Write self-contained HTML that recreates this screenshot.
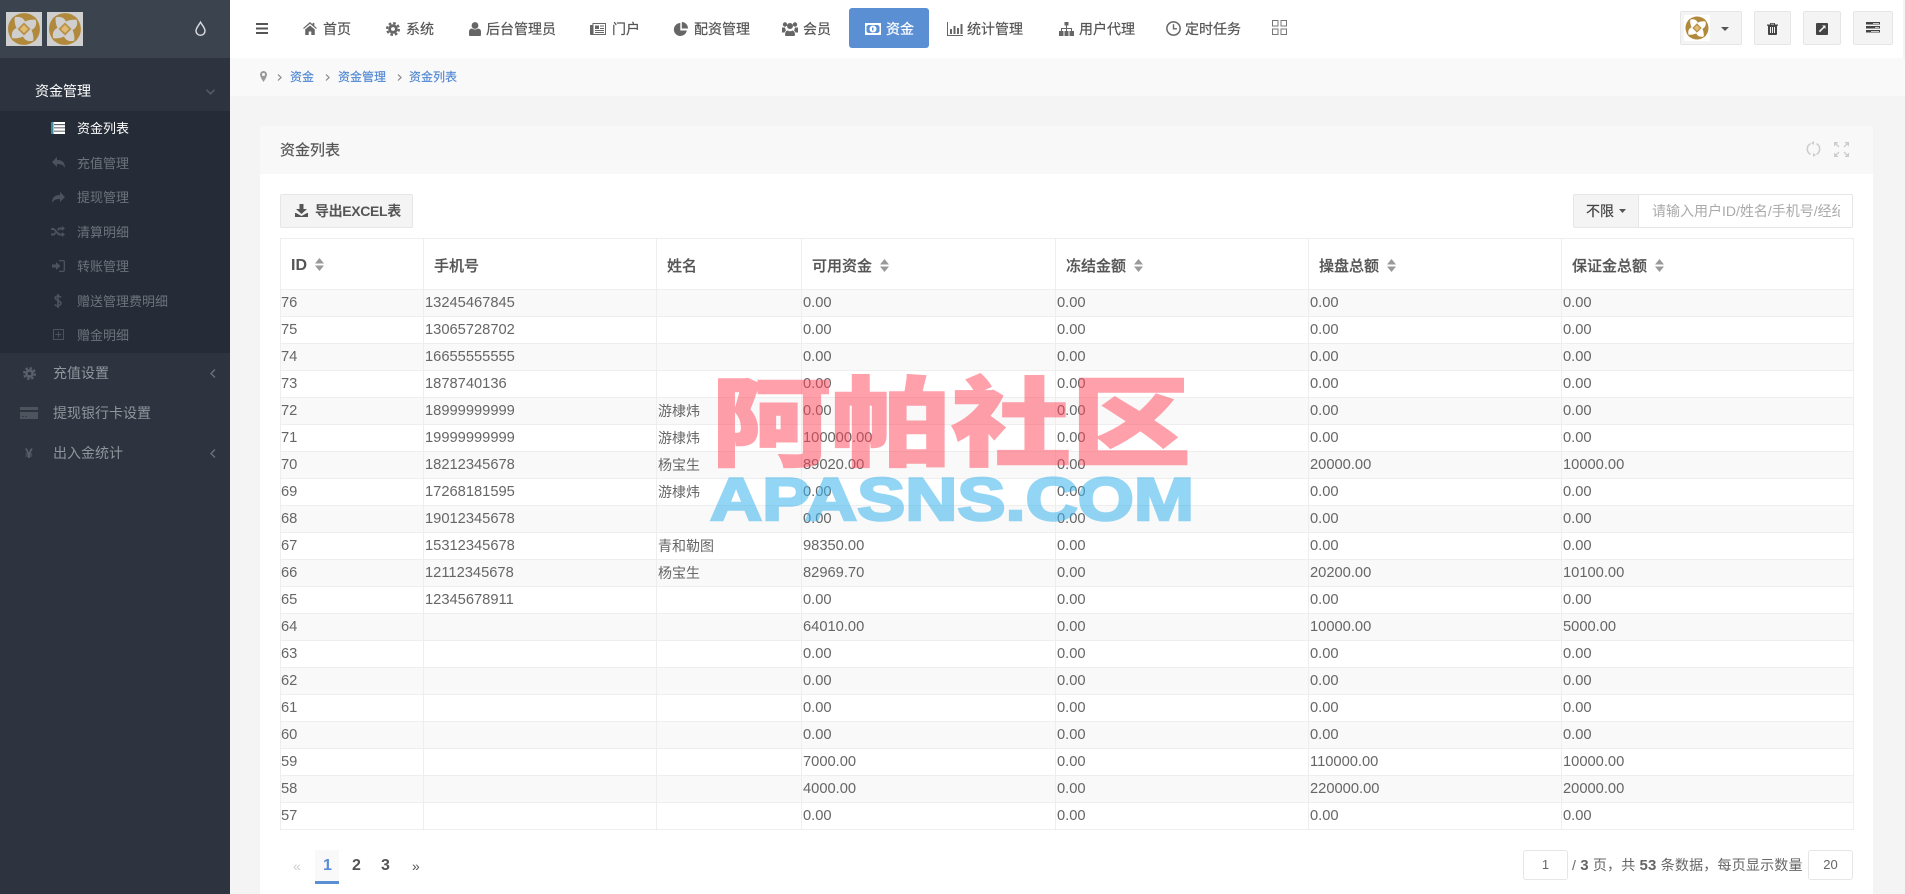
<!DOCTYPE html>
<html lang="zh-CN">
<head>
<meta charset="utf-8">
<title>资金列表</title>
<style>
*{box-sizing:border-box}
html,body{margin:0;padding:0;width:1905px;height:894px;overflow:hidden;background:#f4f4f4;font-family:"Liberation Sans","Noto Sans CJK SC",sans-serif;color:#666}
.a{position:absolute;white-space:nowrap}
svg{display:block;overflow:visible}
#side{position:absolute;left:0;top:0;width:230px;height:894px;background:#2d3440}
#logo{position:absolute;left:0;top:0;width:230px;height:58px;background:#3b434f}
#sub{position:absolute;left:0;top:111px;width:230px;height:242px;background:#262c37}
#side .t{position:absolute;white-space:nowrap;font-size:13px;line-height:20px;color:#6d737c;margin-top:1px}
#side .m{position:absolute;white-space:nowrap;font-size:14px;line-height:20px;color:#90959c}
#side svg{position:absolute}
#nav{position:absolute;left:0;top:0;width:1903px;height:58px;background:#fff}
#nav .n{position:absolute;top:19px;white-space:nowrap;font-size:14px;line-height:20px;color:#555;-webkit-text-stroke:.2px #555}
#nav svg{position:absolute;color:#666}
.btn{position:absolute;background:#f4f4f4;border:1px solid #e6e6e6;border-radius:2px}
#crumb{position:absolute;left:230px;top:58px;width:1675px;height:38px;background:#f9f9f9}
.c{position:absolute;top:68px;font-size:12px;line-height:18px;color:#4f87d2;white-space:nowrap;-webkit-text-stroke:.15px #4f87d2}
#panel{position:absolute;left:260px;top:126px;width:1613px;height:768px;background:#fff}
#phead{position:absolute;left:0;top:0;width:1613px;height:48px;background:#f8f8f8}
table{position:absolute;left:280px;top:238px;width:1573px;border-collapse:collapse;table-layout:fixed;font-size:14.7px;color:#666;background:#fff}
th,td{border:1px solid #eee;padding:0;overflow:hidden;white-space:nowrap}
th{height:51px;text-align:left;padding-left:10px;padding-top:2px;font-size:15px;font-weight:500;color:#555;-webkit-text-stroke:.2px #555}
th.b{font-weight:700;font-size:16px;-webkit-text-stroke:0;padding-top:3px}
td{height:27px;line-height:26px;padding-left:1px}
td:first-child{padding-left:0}
td.s{font-size:14px}
tr.o td{background:#f9f9f9}
.sort{display:inline-block;vertical-align:-1px;margin-left:8px;width:9px;height:13px}
</style>
</head>
<body>

<div id="nav">
  <svg style="left:256px;top:23px" width="12" height="11" viewBox="0 0 12 11"><path fill="#555" d="M0 0h12v2H0zM0 4.500h12v2H0zM0 9h12v2H0z"/></svg>

  <svg style="left:303px;top:22px" width="14" height="13" viewBox="0 0 16 15"><path fill="currentColor" d="M8 0 0 7l1 1 7-6 7 6 1-1-3-2.600V1h-2v1.700zM2.500 8.500V15h4v-4h3v4h4V8.500L8 4z"/></svg>
  <div class="n" style="left:323px">首页</div>

  <svg style="left:386px;top:22px" width="14" height="14" viewBox="0 0 16 16"><g fill="none" stroke="currentColor"><circle cx="8" cy="8" r="3.800" stroke-width="3.200"/><circle cx="8" cy="8" r="6.700" stroke-width="2.600" stroke-dasharray="3 2.260"/></g></svg>
  <div class="n" style="left:406px">系统</div>

  <svg style="left:469px;top:22px" width="12" height="14" viewBox="0 0 12 14"><circle cx="6" cy="3.500" r="3.400" fill="currentColor"/><path fill="currentColor" d="M1 14h10q1 0 1-1V9.500Q12 7 9 6.500 6 8.500 3 6.500 0 7 0 9.500V13q0 1 1 1z"/></svg>
  <div class="n" style="left:486px">后台管理员</div>

  <svg style="left:590px;top:23px" width="16" height="12" viewBox="0 0 16 12"><path fill="currentColor" d="M0 2h2.500V0H16v12H1q-1 0-1-1zm3.500-1v10h11.500V1zM5 2.500h4v3.500H5zm5 0h4v1h-4zm0 2.500h4v1h-4zM5 7h9v1H5zm0 2h9v1H5z" fill-rule="evenodd"/></svg>
  <div class="n" style="left:612px">门户</div>

  <svg style="left:674px;top:22px" width="14" height="14" viewBox="0 0 14 14"><path fill="currentColor" d="M6.300 1a6.500 6.500 0 1 0 6.500 7.500H6.300zM7.800 0v6.500h6.200A6.500 6.500 0 0 0 7.800 0z"/></svg>
  <div class="n" style="left:694px">配资管理</div>

  <svg style="left:782px;top:22px" width="16" height="14" viewBox="0 0 16 14"><circle cx="3" cy="2.500" r="2.200" fill="currentColor"/><circle cx="13" cy="2.500" r="2.200" fill="currentColor"/><circle cx="8" cy="4" r="3" fill="currentColor"/><path fill="currentColor" d="M0 5.500h3q.5 2 1 3-1 .5-1.500 2H0zm16 0h-3q-.5 2-1 3 1 .5 1.500 2H16zM4 14h8q1 0 1-1 0-4-2.500-4.500-2.500 1.500-5 0Q3 9 3 13q0 1 1 1z"/></svg>
  <div class="n" style="left:803px">会员</div>

  <div style="position:absolute;left:849px;top:8px;width:80px;height:40px;background:#5b8fd4;border-radius:3px"></div>
  <svg style="left:865px;top:23px;color:#fff" width="16" height="12" viewBox="0 0 16 12"><path fill="#fff" fill-rule="evenodd" d="M0 0h16v12H0zM3 2 1.500 3.500v5L3 10h10l1.500-1.500v-5L13 2zM8 2.500a3.500 3.500 0 1 1 0 7 3.500 3.500 0 0 1 0-7zM7 4.500h1.500v3H7z"/></svg>
  <div class="n" style="left:886px;color:#fff;-webkit-text-stroke:.2px #fff">资金</div>

  <svg style="left:947px;top:22px" width="16" height="14" viewBox="0 0 16 14"><path fill="currentColor" d="M0 0h1v13h15v1H0zM3 7h2v5H3zm3.500-3h2v8h-2zM10 6h2v6h-2zm3.500-4h2v10h-2z"/></svg>
  <div class="n" style="left:967px">统计管理</div>

  <svg style="left:1059px;top:22px" width="15" height="14" viewBox="0 0 15 14"><path fill="currentColor" d="M5.500 0h4v3.500h-1.500v2.500h5V9h2v5h-4.500V9h1.500V7H8v2h1.500v5h-4V9H7V7H3v2h1.500v5H0V9h2V6h5V3.500H5.500z"/></svg>
  <div class="n" style="left:1079px">用户代理</div>

  <svg style="left:1166px;top:21px" width="15" height="15" viewBox="0 0 14 14"><circle cx="7" cy="7" r="6.200" fill="none" stroke="currentColor" stroke-width="1.400"/><path d="M7 3v4.300h3.200" fill="none" stroke="currentColor" stroke-width="1.300"/></svg>
  <div class="n" style="left:1185px">定时任务</div>

  <svg style="left:1272px;top:20px" width="15" height="15" viewBox="0 0 15 15"><path fill="none" stroke="#777" d="M.5.500h5.500v5.500H.5zM9 .5h5.500v5.500H9zM.5 9h5.500v5.500H.5zM9 9h5.500v5.500H9z"/></svg>

  <div class="btn" style="left:1680px;top:11px;width:62px;height:34px"></div>
  <div style="position:absolute;left:1684px;top:15px;width:26px;height:26px;background:#fff"></div>
  <svg style="left:1684px;top:15px" width="26" height="26" viewBox="0 0 36 36"><use href="#swirl"/></svg>
  <svg style="left:1721px;top:27px" width="8" height="4" viewBox="0 0 8 4"><path fill="#555" d="M0 0h8L4 4z"/></svg>

  <div class="btn" style="left:1754px;top:11px;width:37px;height:34px"></div>
  <svg style="left:1767px;top:23px" width="11" height="12" viewBox="0 0 11 12"><path fill="#444" fill-rule="evenodd" d="M0 1.500h3V.5q0-.5.500-.5h4q.5 0 .5.5v1h3v1.200h-1V11q0 1-1 1H2q-1 0-1-1V2.700H0zM4 .8v.7h3V.8zM3 4v6h1V4zm2 0v6h1V4zm2 0v6h1V4z"/></svg>

  <div class="btn" style="left:1803px;top:11px;width:38px;height:34px"></div>
  <svg style="left:1816px;top:23px" width="12" height="12" viewBox="0 0 12 12"><path fill="#444" fill-rule="evenodd" d="M1 0h10q1 0 1 1v10q0 1-1 1H1q-1 0-1-1V1q0-1 1-1zm5 2.500 1.300 1.300L2.800 8l1.200 1.200 4.300-4.400L9.500 6V2.500z"/></svg>

  <div class="btn" style="left:1853px;top:11px;width:40px;height:34px"></div>
  <svg style="left:1866px;top:22px" width="14" height="11" viewBox="0 0 14 11"><path fill="#444" d="M0 0h14v2.500H0zM0 4h14v2.500H0zM0 8h14v2.500H0z"/><path fill="#f4f4f4" d="M7 1h6v.8H7zM9 5h4v.8H9zM5 9h8v.8H5z"/></svg>
</div>

<div id="crumb"></div>
<svg class="a" style="left:260px;top:71px" width="7" height="11" viewBox="0 0 7 11"><path fill="#999" fill-rule="evenodd" d="M3.500 0A3.500 3.500 0 0 1 7 3.500C7 6 3.500 11 3.500 11S0 6 0 3.500A3.500 3.500 0 0 1 3.500 0zm0 2a1.500 1.500 0 1 0 0 3 1.500 1.500 0 0 0 0-3z"/></svg>
<svg class="a" style="left:277px;top:74px" width="5" height="7" viewBox="0 0 5 7"><path fill="none" stroke="#888" stroke-width="1.200" d="M1 .5l3 3-3 3"/></svg>
<div class="c" style="left:290px">资金</div>
<svg class="a" style="left:325px;top:74px" width="5" height="7" viewBox="0 0 5 7"><path fill="none" stroke="#888" stroke-width="1.200" d="M1 .5l3 3-3 3"/></svg>
<div class="c" style="left:338px">资金管理</div>
<svg class="a" style="left:397px;top:74px" width="5" height="7" viewBox="0 0 5 7"><path fill="none" stroke="#888" stroke-width="1.200" d="M1 .5l3 3-3 3"/></svg>
<div class="c" style="left:409px">资金列表</div>

<div id="panel"><div id="phead"></div></div>
<div class="a" style="left:280px;top:140px;font-size:15px;line-height:22px;color:#555;-webkit-text-stroke:.2px #555">资金列表</div>

<svg class="a" style="left:1806px;top:141px" width="15" height="16" viewBox="0 0 15 16"><g fill="none" stroke="#ccc" stroke-width="1.500"><path d="M4.500 2.700a6 6 0 0 0 0 10.600"/><path d="M10.500 13.300a6 6 0 0 0 0-10.600"/></g><path fill="#ccc" d="M8 0v4L5 2zM7 16v-4l3 2z"/></svg>
<svg class="a" style="left:1834px;top:142px" width="15" height="15" viewBox="0 0 15 15"><path fill="none" stroke="#ccc" stroke-width="1.300" d="M1 1l4 4M14 1l-4 4M1 14l4-4M14 14l-4-4"/><path fill="#ccc" d="M0 0h4.500L0 4.500zM15 0v4.500L10.500 0zM0 15v-4.500L4.500 15zM15 15h-4.500L15 10.500z"/></svg>

<div class="btn" style="left:280px;top:194px;width:133px;height:34px"></div>
<svg class="a" style="left:295px;top:204px" width="13" height="13" viewBox="0 0 13 13"><path fill="#555" d="M4.500 0h4v5H12L6.500 10 1 5h3.500zM0 9l1 0 5.500 3L12 9h1v4H0z"/></svg>
<div class="a" style="left:315px;top:201px;font-size:14px;line-height:20px;font-weight:700;color:#555;letter-spacing:-.35px">导出EXCEL表</div>

<div class="btn" style="left:1573px;top:194px;width:66px;height:34px;background:#f4f4f4;border-radius:2px 0 0 2px"></div>
<div class="a" style="left:1586px;top:201px;font-size:14px;line-height:20px;color:#444;-webkit-text-stroke:.2px #444">不限</div>
<svg class="a" style="left:1619px;top:209px" width="7" height="4" viewBox="0 0 7 4"><path fill="#555" d="M0 0h7L3.500 4z"/></svg>
<div class="a" style="left:1638px;top:194px;width:215px;height:34px;background:#fff;border:1px solid #e6e6e6;overflow:hidden;border-radius:0 2px 2px 0"></div>
<div class="a" style="left:1652px;top:201px;width:188px;overflow:hidden;font-size:14px;line-height:20px;color:#aaa">请输入用户ID/姓名/手机号/经纪人</div>

<table>
<colgroup><col style="width:143px"><col style="width:233px"><col style="width:145px"><col style="width:254px"><col style="width:253px"><col style="width:253px"><col style="width:292px"></colgroup>
<tr>
<th class="b">ID<svg class="sort" viewBox="0 0 9 13" style="display:inline-block"><path fill="#999" d="M4.500 0 9 5.500H0zM4.500 13 0 7.500h9z"/></svg></th>
<th>手机号</th>
<th>姓名</th>
<th>可用资金<svg class="sort" viewBox="0 0 9 13" style="display:inline-block"><path fill="#999" d="M4.500 0 9 5.500H0zM4.500 13 0 7.500h9z"/></svg></th>
<th>冻结金额<svg class="sort" viewBox="0 0 9 13" style="display:inline-block"><path fill="#999" d="M4.500 0 9 5.500H0zM4.500 13 0 7.500h9z"/></svg></th>
<th>操盘总额<svg class="sort" viewBox="0 0 9 13" style="display:inline-block"><path fill="#999" d="M4.500 0 9 5.500H0zM4.500 13 0 7.500h9z"/></svg></th>
<th>保证金总额<svg class="sort" viewBox="0 0 9 13" style="display:inline-block"><path fill="#999" d="M4.500 0 9 5.500H0zM4.500 13 0 7.500h9z"/></svg></th>
</tr>
<tr class="o"><td>76</td><td>13245467845</td><td class="s"></td><td>0.00</td><td>0.00</td><td>0.00</td><td>0.00</td></tr>
<tr><td>75</td><td>13065728702</td><td class="s"></td><td>0.00</td><td>0.00</td><td>0.00</td><td>0.00</td></tr>
<tr class="o"><td>74</td><td>16655555555</td><td class="s"></td><td>0.00</td><td>0.00</td><td>0.00</td><td>0.00</td></tr>
<tr><td>73</td><td>1878740136</td><td class="s"></td><td>0.00</td><td>0.00</td><td>0.00</td><td>0.00</td></tr>
<tr class="o"><td>72</td><td>18999999999</td><td class="s">游棣炜</td><td>0.00</td><td>0.00</td><td>0.00</td><td>0.00</td></tr>
<tr><td>71</td><td>19999999999</td><td class="s">游棣炜</td><td>100000.00</td><td>0.00</td><td>0.00</td><td>0.00</td></tr>
<tr class="o"><td>70</td><td>18212345678</td><td class="s">杨宝生</td><td>89020.00</td><td>0.00</td><td>20000.00</td><td>10000.00</td></tr>
<tr><td>69</td><td>17268181595</td><td class="s">游棣炜</td><td>0.00</td><td>0.00</td><td>0.00</td><td>0.00</td></tr>
<tr class="o"><td>68</td><td>19012345678</td><td class="s"></td><td>0.00</td><td>0.00</td><td>0.00</td><td>0.00</td></tr>
<tr><td>67</td><td>15312345678</td><td class="s">青和勒图</td><td>98350.00</td><td>0.00</td><td>0.00</td><td>0.00</td></tr>
<tr class="o"><td>66</td><td>12112345678</td><td class="s">杨宝生</td><td>82969.70</td><td>0.00</td><td>20200.00</td><td>10100.00</td></tr>
<tr><td>65</td><td>12345678911</td><td class="s"></td><td>0.00</td><td>0.00</td><td>0.00</td><td>0.00</td></tr>
<tr class="o"><td>64</td><td></td><td class="s"></td><td>64010.00</td><td>0.00</td><td>10000.00</td><td>5000.00</td></tr>
<tr><td>63</td><td></td><td class="s"></td><td>0.00</td><td>0.00</td><td>0.00</td><td>0.00</td></tr>
<tr class="o"><td>62</td><td></td><td class="s"></td><td>0.00</td><td>0.00</td><td>0.00</td><td>0.00</td></tr>
<tr><td>61</td><td></td><td class="s"></td><td>0.00</td><td>0.00</td><td>0.00</td><td>0.00</td></tr>
<tr class="o"><td>60</td><td></td><td class="s"></td><td>0.00</td><td>0.00</td><td>0.00</td><td>0.00</td></tr>
<tr><td>59</td><td></td><td class="s"></td><td>7000.00</td><td>0.00</td><td>110000.00</td><td>10000.00</td></tr>
<tr class="o"><td>58</td><td></td><td class="s"></td><td>4000.00</td><td>0.00</td><td>220000.00</td><td>20000.00</td></tr>
<tr><td>57</td><td></td><td class="s"></td><td>0.00</td><td>0.00</td><td>0.00</td><td>0.00</td></tr>
</table>

<div class="a" style="left:293px;top:856px;font-size:14px;line-height:20px;color:#ccc">«</div>
<div class="a" style="left:315px;top:850px;width:24px;height:34px;background:#f9f9f9;border-bottom:3px solid #5b8fd4"></div>
<div class="a" style="left:323px;top:856px;font-size:16px;line-height:20px;font-weight:700;color:#5b8fd4">1</div>
<div class="a" style="left:352px;top:856px;font-size:16px;line-height:20px;font-weight:700;color:#555">2</div>
<div class="a" style="left:381px;top:856px;font-size:16px;line-height:20px;font-weight:700;color:#555">3</div>
<div class="a" style="left:412px;top:856px;font-size:14px;line-height:20px;color:#555">»</div>

<div class="a" style="left:1523px;top:850px;width:45px;height:30px;border:1px solid #e6e6e6;border-radius:3px;background:#fff;font-size:13px;line-height:28px;text-align:center;color:#666">1</div>
<div class="a" style="left:1572px;top:855px;font-size:14px;line-height:20px;color:#666;letter-spacing:.2px">/ <b style="font-size:15px">3</b> 页，共 <b style="font-size:15px">53</b> 条数据，每页显示数量</div>
<div class="a" style="left:1808px;top:850px;width:45px;height:30px;border:1px solid #e6e6e6;border-radius:3px;background:#fff;font-size:13px;line-height:28px;text-align:center;color:#666">20</div>

<div id="side">
  <div id="logo"></div>
  <div style="position:absolute;left:6px;top:12px;width:36px;height:34px;background:#cfcfcf"></div>
  <div style="position:absolute;left:47px;top:12px;width:36px;height:34px;background:#cfcfcf"></div>
  <svg style="left:6px;top:11px" width="36" height="36" viewBox="0 0 36 36">
    <defs>
      <g id="swirl">
        <g fill="#b1893c">
          <path id="arm" d="M31 9C26 1 14-1 5 8 12 4 17 6 19 10.500 22 9 27 8 31 9z"/>
          <use href="#arm" transform="rotate(90 18 18)"/>
          <use href="#arm" transform="rotate(180 18 18)"/>
          <use href="#arm" transform="rotate(270 18 18)"/>
        </g>
        <path fill="#b8914a" d="M18 11.500l6.500 6.500-6.500 6.500-6.500-6.500z"/>
        <path fill="#e0bd72" d="M18 14l4 4-4 4-4-4z"/>
      </g>
    </defs>
    <use href="#swirl"/>
  </svg>
  <svg style="left:47px;top:11px" width="36" height="36" viewBox="0 0 36 36"><use href="#swirl"/></svg>
  <svg style="left:195px;top:21px" width="11" height="15" viewBox="0 0 11 15"><path fill="none" stroke="#d5d8dc" stroke-width="1.500" d="M5.500 1.200C4 4 1 7 1 9.800a4.500 4.500 0 0 0 9 0C10 7 7 4 5.500 1.200z"/></svg>

  <div class="m" style="left:35px;top:81px;color:#fff">资金管理</div>
  <svg style="left:206px;top:89px" width="9" height="6" viewBox="0 0 9 6"><path fill="none" stroke="#555c67" stroke-width="1.500" d="M.5.800l4 4 4-4"/></svg>

  <div id="sub"></div>

  <svg style="left:51px;top:122px" width="14" height="12" viewBox="0 0 14 12"><path fill="#fff" d="M0 0h14v12H0z"/><path fill="#262c37" d="M3 2.300h11v.8H3zM3 5.500h11v.8H3zM3 8.700h11v.8H3z"/><path fill="#3f8c9f" d="M0 0h2.500v12H0z"/></svg>
  <div class="t" style="left:77px;top:118px;color:#fff">资金列表</div>

  <svg style="left:52px;top:156px" width="13" height="13" viewBox="0 0 13 13"><path fill="#4d535d" d="M5 1v3c5 0 8 2 8 8-1.500-3-4-4-8-4v3L0 6z"/></svg>
  <div class="t" style="left:77px;top:153px">充值管理</div>

  <svg style="left:52px;top:191px" width="13" height="13" viewBox="0 0 13 13"><path fill="#4d535d" d="M8 1v3C3 4 0 6 0 12c1.500-3 4-4 8-4v3l5-5z"/></svg>
  <div class="t" style="left:77px;top:187px">提现管理</div>

  <svg style="left:51px;top:226px" width="14" height="11" viewBox="0 0 14 11"><path fill="#4d535d" d="M0 2h3l5.500 5.500H11V6l3 2.500L11 11V9.500H7.700L2.500 4H0zM0 7.500h2.500l1.500-1.500 1.300 1.300L3.300 9.500H0zM11 0l3 2.500L11 5V3.500H8.500L7.300 4.700 6 3.400 7.700 1.500H11z"/></svg>
  <div class="t" style="left:77px;top:222px">清算明细</div>

  <svg style="left:52px;top:260px" width="13" height="12" viewBox="0 0 13 12"><path fill="#4d535d" d="M4 2l4.500 4L4 10V7.500H0v-3h4zM7 0h4q2 0 2 2v8q0 2-2 2H7v-1.300h4q.7 0 .7-.7V2q0-.7-.7-.7H7z"/></svg>
  <div class="t" style="left:77px;top:256px">转账管理</div>

  <svg style="left:54px;top:294px" width="8" height="14" viewBox="0 0 8 14"><path fill="none" stroke="#4d535d" stroke-width="1.700" d="M7 3.500C6 2 2 1.500 1.200 3.500 .5 6 7 6.500 7 9.500 6.500 12 2 12.500 .8 10.500M4 0v14"/></svg>
  <div class="t" style="left:77px;top:291px">赠送管理费明细</div>

  <svg style="left:53px;top:329px" width="11" height="11" viewBox="0 0 11 11"><path fill="none" stroke="#4d535d" d="M.5.500h10v10H.5zM5.500 2.500v6M2.500 5.500h6"/></svg>
  <div class="t" style="left:77px;top:325px">赠金明细</div>

  <svg style="left:23px;top:367px" width="13" height="13" viewBox="0 0 16 16"><g fill="none" stroke="#5a606a"><circle cx="8" cy="8" r="3.800" stroke-width="3.200"/><circle cx="8" cy="8" r="6.700" stroke-width="2.600" stroke-dasharray="3 2.260"/></g></svg>
  <div class="m" style="left:53px;top:363px">充值设置</div>
  <svg style="left:210px;top:369px" width="6" height="9" viewBox="0 0 6 9"><path fill="none" stroke="#6a707a" stroke-width="1.400" d="M5 .5l-4 4 4 4"/></svg>

  <svg style="left:20px;top:407px" width="18" height="12" viewBox="0 0 18 12"><path fill="#4e545e" d="M0 0h18v3H0zM0 5h18v7H0z"/><path fill="#2d3440" d="M2 9h2v.8H2zM5 9h2v.8H5z"/></svg>
  <div class="m" style="left:53px;top:403px">提现银行卡设置</div>

  <div style="position:absolute;left:25px;top:443px;font-size:14px;line-height:20px;font-weight:700;color:#5a606a">¥</div>
  <div class="m" style="left:53px;top:443px">出入金统计</div>
  <svg style="left:210px;top:449px" width="6" height="9" viewBox="0 0 6 9"><path fill="none" stroke="#6a707a" stroke-width="1.400" d="M5 .5l-4 4 4 4"/></svg>
</div>

<svg class="a" style="left:700px;top:360px" width="510" height="170" viewBox="0 0 510 170">
  <g opacity=".5" fill="#ff4458" stroke="#ff4458" stroke-width="1.500" font-family="'Noto Sans CJK SC',sans-serif" font-weight="900">
    <text x="11" y="98" font-size="97" textLength="480" lengthAdjust="spacingAndGlyphs">阿帕社区</text>
  </g>
  <g opacity=".55" fill="#3cb4ec" stroke="#3cb4ec" stroke-width="2.500" font-family="'Liberation Sans',sans-serif" font-weight="700">
    <text x="10" y="160" font-size="60" textLength="484" lengthAdjust="spacingAndGlyphs">APASNS.COM</text>
  </g>
</svg>

</body>
</html>
